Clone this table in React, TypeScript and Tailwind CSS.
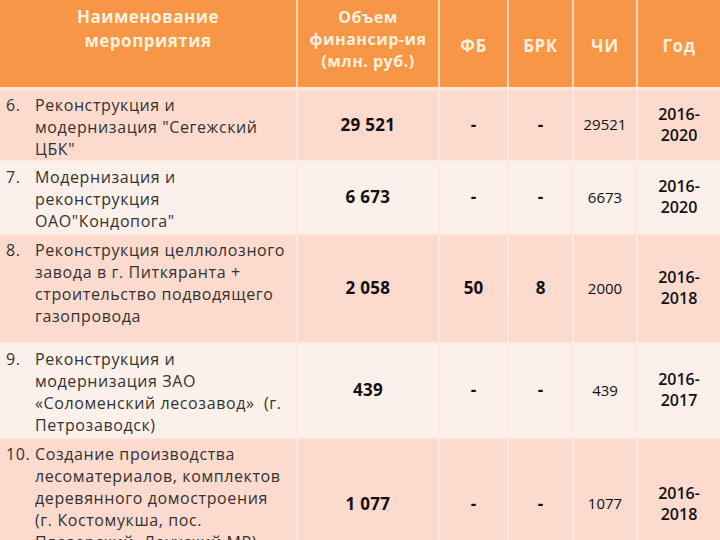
const rows = [
  {
    n: '6.',
    lines: ['Реконструкция и', 'модернизация "Сегежский', 'ЦБК"'],
    total: '29 521',
    fb: '-',
    brk: '-',
    chi: '29521',
    year: ['2016-', '2020'],
    h: 'h-[72px]',
    odd: true,
  },
  {
    n: '7.',
    lines: ['Модернизация и', 'реконструкция', 'ОАО"Кондопога"'],
    total: '6 673',
    fb: '-',
    brk: '-',
    chi: '6673',
    year: ['2016-', '2020'],
    h: 'h-[73px]',
    odd: false,
  },
  {
    n: '8.',
    lines: ['Реконструкция целлюлозного', 'завода в г. Питкяранта +', 'строительство подводящего', 'газопровода'],
    total: '2 058',
    fb: '50',
    brk: '8',
    chi: '2000',
    year: ['2016-', '2018'],
    h: 'h-[109px]',
    odd: true,
  },
  {
    n: '9.',
    lines: ['Реконструкция и', 'модернизация ЗАО', '«Соломенский лесозавод»  (г.', 'Петрозаводск)'],
    total: '439',
    fb: '-',
    brk: '-',
    chi: '439',
    year: ['2016-', '2017'],
    h: 'h-[95px]',
    odd: false,
  },
  {
    n: '10.',
    lines: [
      'Создание производства',
      'лесоматериалов, комплектов',
      'деревянного домостроения',
      '(г. Костомукша, пос.',
      'Пяозерский, Лоухский МР)',
    ],
    total: '1 077',
    fb: '-',
    brk: '-',
    chi: '1077',
    year: ['2016-', '2018'],
    h: 'h-[132px]',
    odd: true,
  },
]

export default function App() {
  return (
    <div className="w-[720px] h-[540px] overflow-hidden bg-white font-['Open_Sans',sans-serif]">
      <table className="w-[720px] table-fixed border-collapse">
        <colgroup>
          <col className="w-[297px]" />
          <col className="w-[142px]" />
          <col className="w-[69px]" />
          <col className="w-[65px]" />
          <col className="w-[64px]" />
          <col className="w-[83px]" />
        </colgroup>
        <thead>
          <tr className="h-[88px] bg-[#f79646] text-[#fdf0dc] text-[17px] leading-[24px] tracking-[0.5px] border-b-[3px] border-[#fde9d9]">
            <th className="align-top pt-[5px] border-r-2 border-[#fbd4b4] font-bold">
              Наименование
              <br />
              мероприятия
            </th>
            <th className="align-middle pb-[8px] border-r-2 border-[#fbd4b4] font-bold text-[16px] leading-[22px]">
              Объем
              <br />
              финансир-ия
              <br />
              (млн. руб.)
            </th>
            <th className="align-middle pt-[6px] border-r-2 border-[#fbd4b4] font-bold">ФБ</th>
            <th className="align-middle pt-[6px] border-r-2 border-[#fbd4b4] font-bold">БРК</th>
            <th className="align-middle pt-[6px] border-r-2 border-[#fbd4b4] font-bold">ЧИ</th>
            <th className="align-middle pt-[6px] font-bold">Год</th>
          </tr>
        </thead>
        <tbody>
          {rows.map((r) => (
            <tr
              key={r.n}
              className={`${r.h} ${r.odd ? 'bg-[#fcdacd]' : 'bg-[#fbf0ea]'} border-b-2 border-[#fdebe3]`}
            >
              <td className="align-top pt-[4px] pl-[6px] border-r-2 border-[#fdebe3]">
                <div className="flex text-[16px] leading-[22px] tracking-[0.6px] text-[#333]">
                  <span className="w-[29px] shrink-0">{r.n}</span>
                  <div className="flex flex-col whitespace-pre">
                    {r.lines.map((l) => (
                      <span key={l}>{l}</span>
                    ))}
                  </div>
                </div>
              </td>
              <td className="align-middle text-center font-bold text-[17px] tracking-[0.3px] text-[#111] border-r-2 border-[#fdebe3]">
                {r.total}
              </td>
              <td className="align-middle text-center font-bold text-[17px] text-[#111] border-r-2 border-[#fdebe3]">
                {r.fb}
              </td>
              <td className="align-middle text-center font-bold text-[17px] text-[#111] border-r-2 border-[#fdebe3]">
                {r.brk}
              </td>
              <td className="align-middle text-center text-[15px] font-medium text-[#111] border-r-2 border-[#fdebe3]">
                {r.chi}
              </td>
              <td className="align-middle text-center text-[16px] font-semibold leading-[21px] text-[#111]">
                <div className="flex flex-col items-center">
                  <span>{r.year[0]}</span>
                  <span>{r.year[1]}</span>
                </div>
              </td>
            </tr>
          ))}
        </tbody>
      </table>
    </div>
  )
}
